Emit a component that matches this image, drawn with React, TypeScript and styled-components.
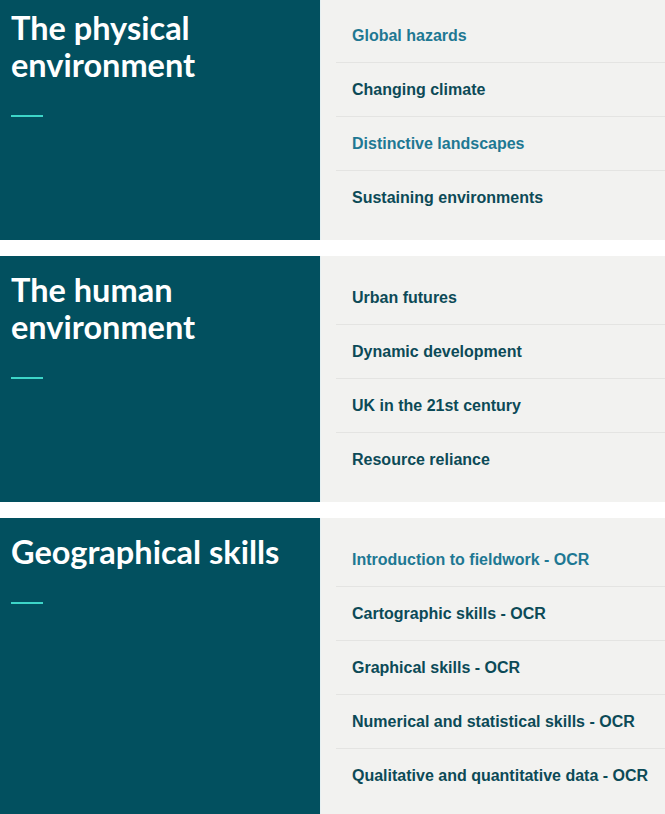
import React from 'react'
import styled, { createGlobalStyle } from 'styled-components';

const sections = [
  {
    title: ['The physical', 'environment'],
    items: [
      { label: 'Global hazards', active: true },
      { label: 'Changing climate' },
      { label: 'Distinctive landscapes', active: true },
      { label: 'Sustaining environments' },
    ],
  },
  {
    title: ['The human', 'environment'],
    items: [
      { label: 'Urban futures' },
      { label: 'Dynamic development' },
      { label: 'UK in the 21st century' },
      { label: 'Resource reliance' },
    ],
  },
  {
    title: ['Geographical skills'],
    items: [
      { label: 'Introduction to fieldwork - OCR', active: true },
      { label: 'Cartographic skills - OCR' },
      { label: 'Graphical skills - OCR' },
      { label: 'Numerical and statistical skills - OCR' },
      { label: 'Qualitative and quantitative data - OCR' },
    ],
  },
];

const App = () => {
  return (
    <>
      <GlobalStyle />
      <Page>
        {sections.map((s, i) => (
          <Section key={i}>
            <Intro>
              <Title>
                {s.title.map((line, j) => (
                  <React.Fragment key={j}>
                    {j > 0 && <br />}
                    {line}
                  </React.Fragment>
                ))}
              </Title>
              <Accent />
            </Intro>
            <List>
              {s.items.map((item) => (
                <Item key={item.label}>
                  <ItemLink $active={!!item.active} href="#">{item.label}</ItemLink>
                </Item>
              ))}
            </List>
          </Section>
        ))}
      </Page>
    </>
  )
}

export default App;

const GlobalStyle = createGlobalStyle`
    html, body {
        margin: 0;
        padding: 0;
        background: #ffffff;
        overflow: hidden;
    }
`;

const Page = styled.div`
    width: 665px;
    margin-top: -6px;
    display: flex;
    flex-direction: column;
    gap: 16px;
`;

const Section = styled.section`
    display: flex;
    width: 100%;
`;

const Intro = styled.div`
    width: 320px;
    flex-shrink: 0;
    background-color: #02505f;
    padding: 15px 11px 0;
    box-sizing: border-box;
`;

const Title = styled.h2`
    margin: 0;
    color: #ffffff;
    font-family: Lato, "Open Sans", sans-serif;
    font-weight: 700;
    font-size: 32.5px;
    line-height: 37px;
    letter-spacing: 0;
`;

const Accent = styled.div`
    width: 32px;
    height: 2px;
    margin-top: 32px;
    background-color: #3dd5c8;
`;

const List = styled.ul`
    flex: 1;
    margin: 0;
    list-style: none;
    background-color: #f2f2f0;
    border-left: 1px solid #e6f0f2;
    padding: 15px 0 15px 15px;
`;

const Item = styled.li`
    height: 54px;
    display: flex;
    align-items: center;
    padding-left: 16px;
    border-bottom: 1px solid #e4e4e2;
    box-sizing: border-box;
    &:last-child {
        border-bottom: none;
    }
`;

const ItemLink = styled.a<{ $active: boolean }>`
    font-family: "Liberation Sans", Arial, sans-serif;
    font-weight: 700;
    font-size: 16px;
    text-decoration: none;
    color: ${(p) => (p.$active ? '#1e7893' : '#0c4a57')};
`;
